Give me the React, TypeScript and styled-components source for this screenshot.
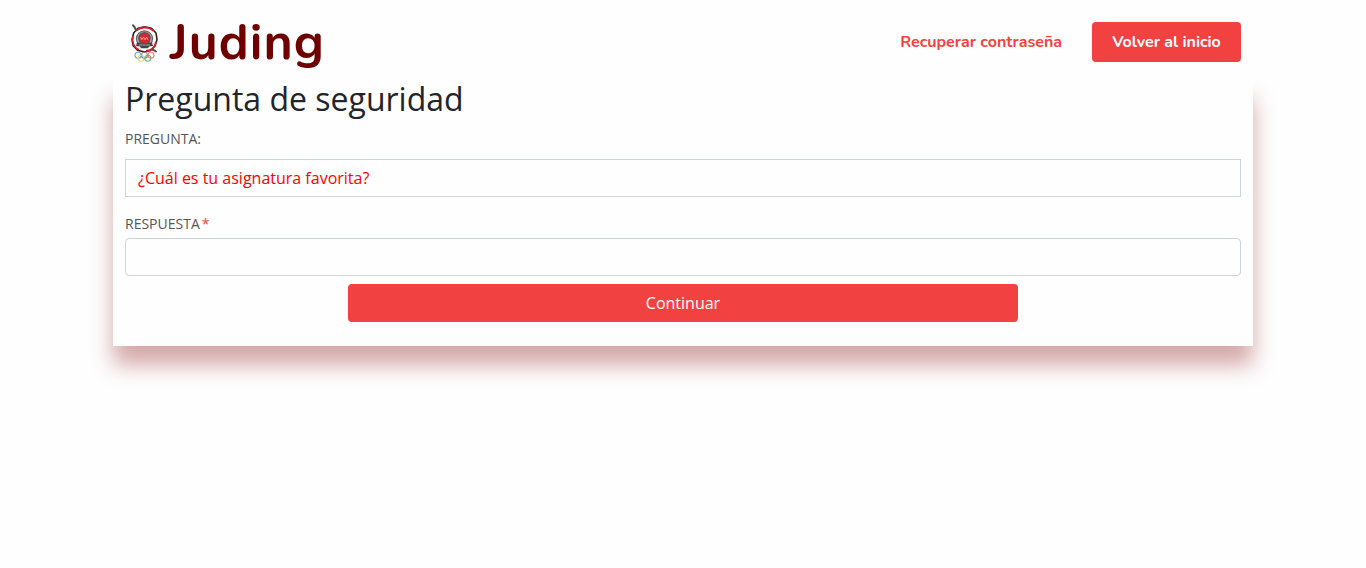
import React from "react";
import styled, { createGlobalStyle } from "styled-components";

const Global = createGlobalStyle`
  *, *::before, *::after { box-sizing: border-box; }
  body { margin: 0; background: #fefefe; color: #212529; font: 400 16px/1.5 "Open Sans", sans-serif; }
`;
const Page = styled.div`min-height: 100vh; overflow: hidden;`;
const Header = styled.header`
  position: relative; z-index: 1; height: 80px; background: #fefefe;
`;
const Bar = styled.div`
  width: 1140px; height: 84px; margin: 0 auto; padding: 0 12px;
  display: flex; align-items: center; justify-content: space-between;
`;
const Brand = styled.a`display: flex; align-items: center; color: #6f0000;`;
const Emblem = styled.svg`width: 40px; height: 42px; display: block; margin: 2px 5px 0 0;`;
const BrandName = styled.span`
  padding-top: 2px;
  font: 700 50px/60px Nunito, "Open Sans", sans-serif; letter-spacing: 1px;
`;
const Nav = styled.nav`
  display: flex; align-items: center; gap: 30px;
  font: 700 16px/24px Nunito, "Open Sans", sans-serif;
`;
const NavLink = styled.a`color: #f14140;`;
const NavButton = styled.a`
  width: 149px; height: 40px; border-radius: 4px; background: #f14140; color: #fff;
  display: flex; align-items: center; justify-content: center;
`;
const Card = styled.main`
  width: 1140px; height: 266px; margin: 0 auto; padding: 0 12px; background: #fefefe;
  box-shadow: 0 19px 21px rgba(135, 0, 0, .34);
  display: flex; flex-direction: column;
`;
const Title = styled.h1`margin: 0; font-size: 32px; line-height: 38px; font-weight: 400;`;
const Label = styled.label<{ $top: number; $bottom: number }>`
  display: block; margin: ${p => p.$top}px 0 ${p => p.$bottom}px;
  font-size: 14px; line-height: 21px; color: #555;
`;
const Required = styled.span`color: #f14140; margin-left: 2px;`;
const Question = styled.div`
  height: 38px; padding: 6px 12px; border: 1px solid #ced4da;
  color: #ff0000; line-height: 24px;
`;
const Answer = styled.input`
  width: 100%; height: 38px; padding: 6px 12px; border: 1px solid #ced4da;
  border-radius: 4px; background: #fefefe; font: inherit; outline: 0;
`;
const Continue = styled.button`
  width: 670px; height: 38px; margin: 8px auto 0; padding: 0; border: 0; border-radius: 4px;
  background: #f14140; color: #fff; font: inherit;
`;

const JudoEmblem = () => (
  <Emblem viewBox="0 0 40 42" fill="none" aria-hidden="true">
    <path d="M19.5 4.800 26.500 6.300 31 11 32 17.500 30 24 25.500 28.500 19.500 30 12.500 28.300 8.200 23.800 7 17.500 8.800 10.800 13 6.300Z" fill="#fff" stroke="#30191b" strokeWidth="1.600" strokeLinejoin="round" />
    <path d="M11 8.800C16 4.300 24 4.500 28.500 9M8 14C6.800 20 9 25.500 14 28M31 20C30 25 26.500 28.500 21 29" stroke="#e51b2d" strokeWidth="1.800" />
    <path d="M8 3.300 9.500 5 11 8M27.500 27.500 29.500 28.500 31 29.500" stroke="#46513a" strokeWidth="2" strokeLinecap="round" />
    <circle cx="19.500" cy="16.800" r="8" fill="#b4b4b4" stroke="#666" strokeWidth="1.300" />
    <path d="M12 20.500h15l1 3.500-4 .5-1 1.800h-7l-1-1.800-4-.5z" fill="#444" />
    <path d="M14 23h11" stroke="#aaa" strokeWidth="1" />
    <circle cx="19.500" cy="16.300" r="5.700" fill="#da2430" stroke="#555" strokeWidth="1.200" />
    <path d="m15.500 15.200 1.500 2.500 1.500-2.500 1.500 2.500 1.500-2.500 1.500 2.500" stroke="#f8bcbc" strokeWidth=".9" />
    <g strokeWidth="1.100">
      <circle cx="13" cy="33.200" r="3" stroke="#64ace0" />
      <circle cx="19.500" cy="33.200" r="3" stroke="#8b8580" />
      <circle cx="26" cy="33.200" r="3" stroke="#eb8374" />
      <circle cx="16.200" cy="36.300" r="3" stroke="#ead572" />
      <circle cx="22.800" cy="36.300" r="3" stroke="#64b783" />
    </g>
  </Emblem>
);

export default function App() {
  return (
    <Page>
      <Global />
      <Header><Bar>
        <Brand><JudoEmblem /><BrandName>Juding</BrandName></Brand>
        <Nav><NavLink>Recuperar contraseña</NavLink><NavButton>Volver al inicio</NavButton></Nav>
      </Bar></Header>
      <Card>
        <Title>Pregunta de seguridad</Title>
        <Label as="div" $top={10} $bottom={10}>PREGUNTA:</Label>
        <Question>¿Cuál es tu asignatura favorita?</Question>
        <Label htmlFor="answer" $top={16} $bottom={4}>RESPUESTA<Required>*</Required></Label>
        <Answer id="answer" />
        <Continue type="submit">Continuar</Continue>
      </Card>
    </Page>
  );
}
